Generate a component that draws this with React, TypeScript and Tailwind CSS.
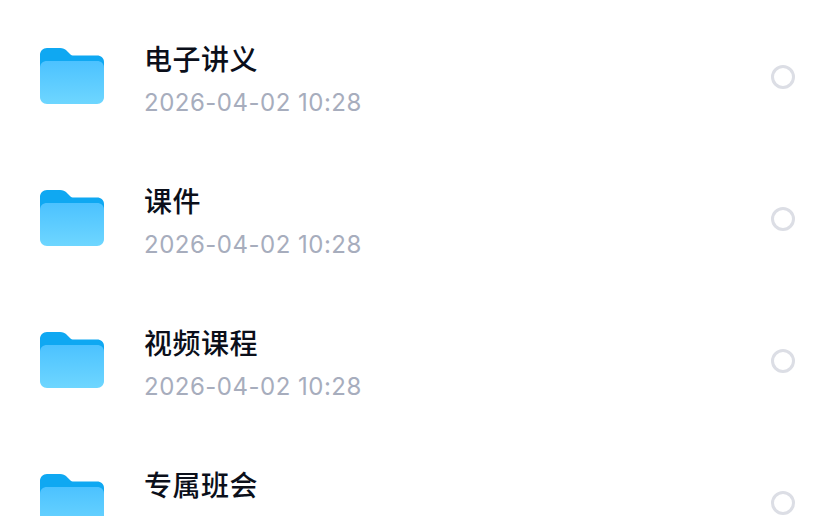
const files = ["电子讲义", "课件", "视频课程", "专属班会"];

function FolderIcon() {
  return (
    <svg width="64" height="56" viewBox="0 0 64 56" className="mb-[2px] shrink-0">
      <defs>
        <linearGradient id="folderFront" x1="0" y1="0" x2="0" y2="1">
          <stop offset="0" stopColor="#4cc2ff" />
          <stop offset="1" stopColor="#6ed6ff" />
        </linearGradient>
      </defs>
      <path
        d="M0 7C0 3 3 0 7 0H20C23 0 25 1 26.500 2.500L30 6C31 7 32 7.500 34 7.500H57C61 7.500 64 10 64 14V30H0Z"
        fill="#0fa8f2"
      />
      <path
        d="M0 20C0 15.500 3 13 7 13H57C61 13 64 15.500 64 20V49C64 53 61 56 57 56H7C3 56 0 53 0 49Z"
        fill="url(#folderFront)"
      />
    </svg>
  );
}

function FileRow({ name }: { name: string }) {
  return (
    <div className="flex h-[142px] shrink-0 items-center pl-10 pr-[33px]">
      <FolderIcon />
      <div className="mt-2 ml-10 flex-1">
        <div className="text-[28px] leading-[40px] font-medium tracking-[0.5px] text-[#0b0f1a]">{name}</div>
        <div className="mt-[3px] font-['Inter',sans-serif] text-[24px] leading-[40px] tracking-[0.5px] text-[#a7adbd]">
          2026-04-02 10:28
        </div>
      </div>
      <div className="h-6 w-6 rounded-full border-[3px] border-[#dcdee5]" />
    </div>
  );
}

export default function App() {
  return (
    <div className="flex h-[516px] w-[828px] flex-col overflow-hidden bg-white pt-[6px] font-['Inter','Noto_Sans_CJK_SC',sans-serif]">
      {files.map((f) => (
        <FileRow key={f} name={f} />
      ))}
    </div>
  );
}
